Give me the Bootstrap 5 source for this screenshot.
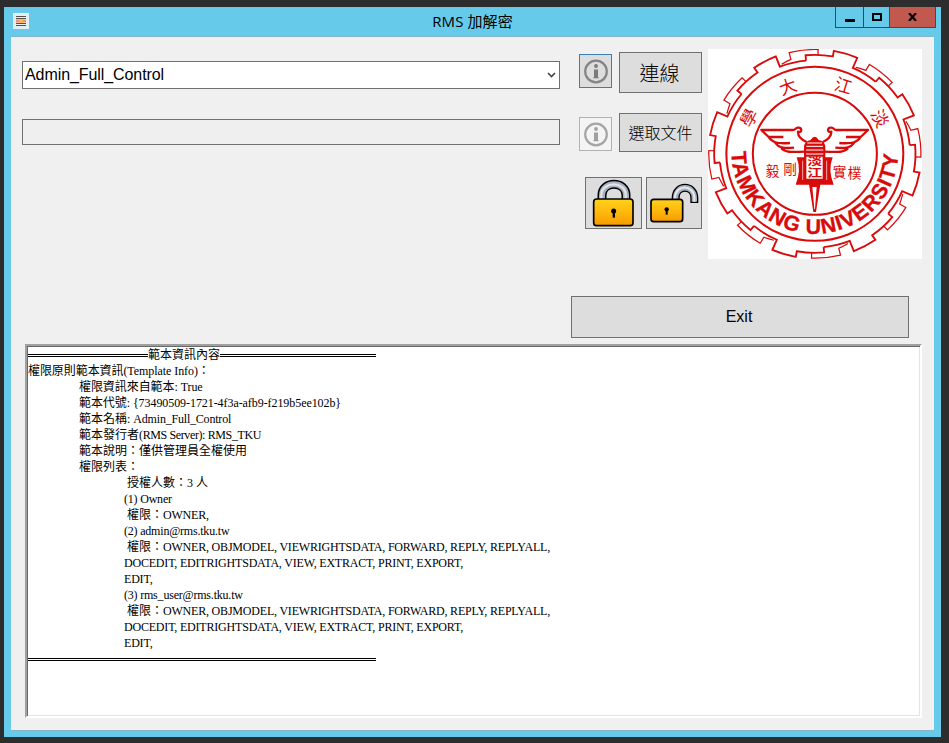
<!DOCTYPE html>
<html lang="zh-Hant">
<head>
<meta charset="utf-8">
<meta name="viewport" content="width=device-width, initial-scale=1">
<title>RMS 加解密</title>
<link href="https://cdn.jsdelivr.net/npm/bootstrap@5.3.0/dist/css/bootstrap.min.css" rel="stylesheet">
<style>
html,body{height:100%}
body{background:#2d2d2d;font-family:"Liberation Sans","Noto Sans CJK TC",sans-serif;color:#000;padding:7px 8px 6px 4px;overflow:hidden}
svg{display:block}
.win{background:#66cbea;width:937px;height:730px;padding:0 7px 6px}
.titlebar{height:29px;flex:none}
.app-ico{margin:6px 0 0 2px}
.title-text{font:15px/28px "Open Sans","Noto Sans CJK TC",sans-serif;padding-left:80px;letter-spacing:.1px}
.ctl{height:21px;border:1px solid #2f4a57;border-top:0;margin:0 0 0 -1px;padding:0;background:none;display:flex;justify-content:center;align-items:center}
.ctl-min{width:29px}.ctl-max{width:27px}.ctl-x{width:47px;background:#c1594f;border-color:#6b3a3a;margin-right:-2px}
.client{background:#f0f0f0;border-top:1px solid #84b4c8;border-bottom:1px solid #84b4c8;padding:12px 12px 0 11px}
.fields{width:538px;padding-top:12px;gap:30px}
.combo{height:28px;border:1px solid #707070;background:#fff;font-size:16px;line-height:25px;padding:0 3px 1px 2px;letter-spacing:-.08px}
.path-box{height:26px;border:1px solid #707070;background:#efefef}
.tools{width:123px;margin-left:19px;padding-top:3px}
.flat{background:#ddd;border:1px solid #707070;border-radius:0;padding:0;color:#000;display:flex;align-items:center;justify-content:center;font-family:"Liberation Sans","Noto Sans CJK TC",sans-serif}
.info{width:33px;height:34px;margin-top:2px}
.info.on{border-color:#3c7fb1}
.info.off{background:#f4f4f4;border-color:#b0b2b4;margin-top:4px}
.connect{width:83px;height:41px;font-size:20px;line-height:38px;font-weight:300;padding:3px 2px 0 0}
.choose{width:83px;height:39px;font-size:16px;line-height:36px;padding-top:2px;font-weight:300}
.locks{margin-top:25px}
.lock-a{width:57px;height:52px}.lock-b{width:56px;height:52px}
.logo{width:214px;height:210px;background:#fff;margin-left:6px}
.exit{width:338px;height:42px;font-size:16px;margin:37px 13px 0 auto;padding-right:2px}
.info-box{margin:6px 0 0 3px;width:897px;height:374px;background:#fff;border:2px solid;border-color:#a0a0a0 #fff #fff #a0a0a0;box-shadow:inset 1px 1px #696969,inset -1px -1px #e3e3e3;padding:1px 0 0 1px;font:12px/16px "Liberation Serif","Noto Sans CJK TC",serif;white-space:pre}
.ln{height:16px;display:flex;align-items:center}
.rule{height:3px;border-top:1px solid #000;border-bottom:1px solid #000}
.r1{width:120px}.r2{width:156px}.r3{width:348px;margin-top:1px}
.i1{padding-left:51px}.i2{padding-left:96px}.i3{padding-left:99px}
.t1{letter-spacing:-.07px}.t2{letter-spacing:-.2px}.t3{letter-spacing:-.38px}
</style>
</head>
<body>
<div class="win d-flex flex-column">
  <header class="titlebar d-flex align-items-start">
    <svg class="app-ico" width="16" height="16" viewBox="0 0 16 16"><path fill="#e3eef2" d="M0 0h16v16H0z"/><path stroke="#55514f" d="M3 3.500h10M3 5.500h10M3 10.500h10M3 12.500h10"/><path stroke="#f0906a" stroke-width="3" d="M3 8h10"/><path fill="#ffb45c" d="M6 6h4v4H6z"/></svg>
    <div class="title-text flex-grow-1 text-center">RMS 加解密</div>
    <div class="d-flex">
      <button class="ctl ctl-min" aria-label="min"><svg width="10" height="13"><path d="M0 8h10v3H0z"/></svg></button>
      <button class="ctl ctl-max" aria-label="max"><svg width="10" height="8"><path fill="none" stroke="#000" stroke-width="2" d="M1 1h8v6H1z"/></svg></button>
      <button class="ctl ctl-x" aria-label="close"><svg width="9" height="8" viewBox="0 0 9 8"><path stroke="#000" stroke-width="2.2" d="M1 0l7 8M8 0L1 8"/></svg></button>
    </div>
  </header>
  <main class="client flex-grow-1">
    <div class="d-flex align-items-start">
      <div class="fields d-flex flex-column">
        <div class="combo d-flex justify-content-between align-items-center"><span>Admin_Full_Control</span><svg width="9" height="7" viewBox="0 0 9 7"><path fill="none" stroke="#444" stroke-width="1.6" d="M1 2l3.500 3.500L8 2"/></svg></div>
        <div class="path-box"></div>
      </div>
      <div class="tools">
        <div class="d-flex justify-content-between">
          <button class="flat info on" aria-label="info"><svg width="24" height="25" viewBox="0 0 24 25"><circle cx="12" cy="12.500" r="10.800" fill="none" stroke="#848484" stroke-width="2.200"/><circle cx="12" cy="7" r="1.900" fill="#7b7b7b"/><path fill="#7b7b7b" d="M10 10.500h4v7.500h.5v1.200h-5V18h.5z"/></svg></button>
          <button class="flat connect">連線</button>
        </div>
        <div class="d-flex justify-content-between mt-3 pt-1">
          <button class="flat info off" aria-label="info"><svg width="24" height="25" viewBox="0 0 24 25"><circle cx="12" cy="12.500" r="10.800" fill="none" stroke="#a5a5a5" stroke-width="2.200"/><circle cx="12" cy="7" r="1.900" fill="#a0a0a0"/><path fill="#a0a0a0" d="M10 10.500h4v7.500h.5v1.200h-5V18h.5z"/></svg></button>
          <button class="flat choose">選取文件</button>
        </div>
        <div class="locks d-flex justify-content-end gap-1">
          <button class="flat lock-a" aria-label="lock"><svg width="55" height="50" viewBox="0 0 165 150"><defs><linearGradient id="g" x2="0" y2="1"><stop stop-color="#ffd21c"/><stop offset=".5" stop-color="#ffb80c"/><stop offset="1" stop-color="#f59a00"/></linearGradient></defs><path fill="none" stroke="#000" stroke-width="27" d="M48 68V52C48 8 120 8 120 52V68"/><path fill="none" stroke="#a9b1bd" stroke-width="18" d="M48 68V52C48 8 120 8 120 52V68"/><path fill="none" stroke="#dfe4ec" stroke-width="7" d="M46 66V50C48 9 118 9 119 50V66"/><rect x="23" y="63" width="118" height="80" rx="9" fill="url(#g)" stroke="#000" stroke-width="5"/><circle cx="83" cy="99" r="7.500"/><path d="M80 100h7v19h-7z"/></svg></button>
          <button class="flat lock-b" aria-label="unlock"><svg width="54" height="50" viewBox="0 0 162 150"><path fill="none" stroke="#000" stroke-width="24" d="M86 67V60C86 19 142 19 142 60V75"/><path fill="none" stroke="#a9b1bd" stroke-width="16" d="M86 67V60C86 19 142 19 142 60V71"/><path fill="none" stroke="#e6eaf0" stroke-width="6" d="M84 66V58C87 19 139 19 142 58V71"/><rect x="12" y="64" width="95" height="67" rx="8" fill="url(#g)" stroke="#000" stroke-width="5"/><circle cx="59" cy="94" r="6.500"/><path d="M56 94h6v16h-6z"/></svg></button>
        </div>
      </div>
      <svg class="logo" viewBox="24 27 642 630" preserveAspectRatio="none">
        <defs>
          <g id="tooth"><path stroke-width="5.500" d="M-26-279.8L-27.4-295.7A297 297 0 0 1 53.1-292.2L56.1-308.9A314 314 0 0 1 125.2-288L112-257.7A281 281 0 0 1 179.5-216.2"/><path stroke-width="3.600" d="M-97.8-268.8A290 290 0 0 1-70.6-283.3L-75.7-303.7A313 313 0 0 1 9.8-312.8L9.3-296.8"/></g>
          <path id="arc" d="M-246-6A246 246 0 0 0 246-6"/>
        </defs>
        <g transform="translate(344.500 341.500) scale(1.017 1)" fill="none" stroke="#d90a0a">
          <use href="#tooth"/><use href="#tooth" transform="rotate(45)"/><use href="#tooth" transform="rotate(90)"/><use href="#tooth" transform="rotate(135)"/><use href="#tooth" transform="rotate(180)"/><use href="#tooth" transform="rotate(225)"/><use href="#tooth" transform="rotate(270)"/><use href="#tooth" transform="rotate(315)"/>
          <circle r="261" stroke-width="6"/><circle r="183" stroke-width="6"/>
          <text fill="#d90a0a" stroke="#d90a0a" stroke-width="1" font-family="Liberation Sans,sans-serif" font-weight="700" font-size="63"><textPath href="#arc" textLength="764">TAMKANG UNIVERSITY</textPath></text>
        </g>
        <g fill="#d90a0a" font-family="Noto Sans CJK TC,sans-serif" font-weight="400" text-anchor="middle" font-size="52">
          <text transform="translate(147 234) rotate(-62)" y="19">學</text>
          <text transform="translate(263 140) rotate(-20)" y="19">大</text>
          <text transform="translate(430 137) rotate(17)" y="19">江</text>
          <text transform="translate(540 235) rotate(62)" y="19">淡</text>
          <g font-size="41"><text x="218" y="407">毅</text><text x="270" y="403">剛</text><text x="419" y="411">實</text><text x="464" y="414">樸</text></g>
        </g>
        <g fill="none" stroke="#d90a0a" stroke-width="7" stroke-linejoin="round">
          <path d="M320 306C305 301 293 288 294 275C309 278 305 262 294 263C285 264 287 270 279 270H184L206 291H250M206 291C215 306 228 312 270 309M225 308C236 323 248 326 282 323M244 325C255 337 270 337 317 335"/>
          <path d="M368 306C383 301 395 288 394 275C379 278 383 262 394 263C403 264 401 270 409 270H504L482 291H438M482 291C473 306 460 312 418 309M463 308C452 323 440 326 406 323M444 325C433 337 418 337 371 335"/>
        </g>
        <path fill="#d90a0a" d="M332 300Q344 280 356 300Q373 303 376 318V352H398Q383 391 401 434H287Q305 391 290 352H312V318Q315 303 332 300ZM327 433H361L348 516H340Z"/>
        <path stroke="#fff" stroke-width="3" d="M322 309h44M319 319h50M318 330h52M318 342h52"/>
        <path fill="#fff" d="M319 350h49v66h-49zM337 441h13l-5 66h-2z"/>
        <path stroke="#fff" stroke-width="2" d="M308 362v58M380 362v58"/>
        <g fill="#d90a0a" font-family="Noto Sans CJK TC,sans-serif" font-weight="700" font-size="33" text-anchor="middle"><text transform="translate(344 379) scale(1.350 1)">淡</text><text transform="translate(344 412) scale(1.350 1)">江</text></g>
      </svg>
    </div>
    <button class="flat exit">Exit</button>
    <div class="info-box"><div class="ln"><span class="rule r1"></span><span>範本資訊內容</span><span class="rule r2"></span></div><div class="ln t1">權限原則範本資訊(Template Info)：</div><div class="ln i1 t1">權限資訊來自範本: True</div><div class="ln i1 t1">範本代號: {73490509-1721-4f3a-afb9-f219b5ee102b}</div><div class="ln i1">範本名稱: <span class="t2">Admin_Full_Control</span></div><div class="ln i1">範本發行者<span class="t3">(RMS Server): RMS_TKU</span></div><div class="ln i1">範本說明：僅供管理員全權使用</div><div class="ln i1">權限列表：</div><div class="ln i3">授權人數：3 人</div><div class="ln i2 t2">(1) Owner</div><div class="ln i3">權限：<span class="t2">OWNER,</span></div><div class="ln i2 t2">(2) admin@rms.tku.tw</div><div class="ln i3">權限：<span class="t2">OWNER, OBJMODEL, VIEWRIGHTSDATA, FORWARD, REPLY, REPLYALL,</span></div><div class="ln i2 t2">DOCEDIT, EDITRIGHTSDATA, VIEW, EXTRACT, PRINT, EXPORT,</div><div class="ln i2 t2">EDIT,</div><div class="ln i2 t2">(3) rms_user@rms.tku.tw</div><div class="ln i3">權限：<span class="t2">OWNER, OBJMODEL, VIEWRIGHTSDATA, FORWARD, REPLY, REPLYALL,</span></div><div class="ln i2 t2">DOCEDIT, EDITRIGHTSDATA, VIEW, EXTRACT, PRINT, EXPORT,</div><div class="ln i2 t2">EDIT,</div><div class="ln"><span class="rule r3"></span></div></div>
  </main>
</div>
<script src="https://cdn.jsdelivr.net/npm/bootstrap@5.3.0/dist/js/bootstrap.bundle.min.js"></script>
</body>
</html>
